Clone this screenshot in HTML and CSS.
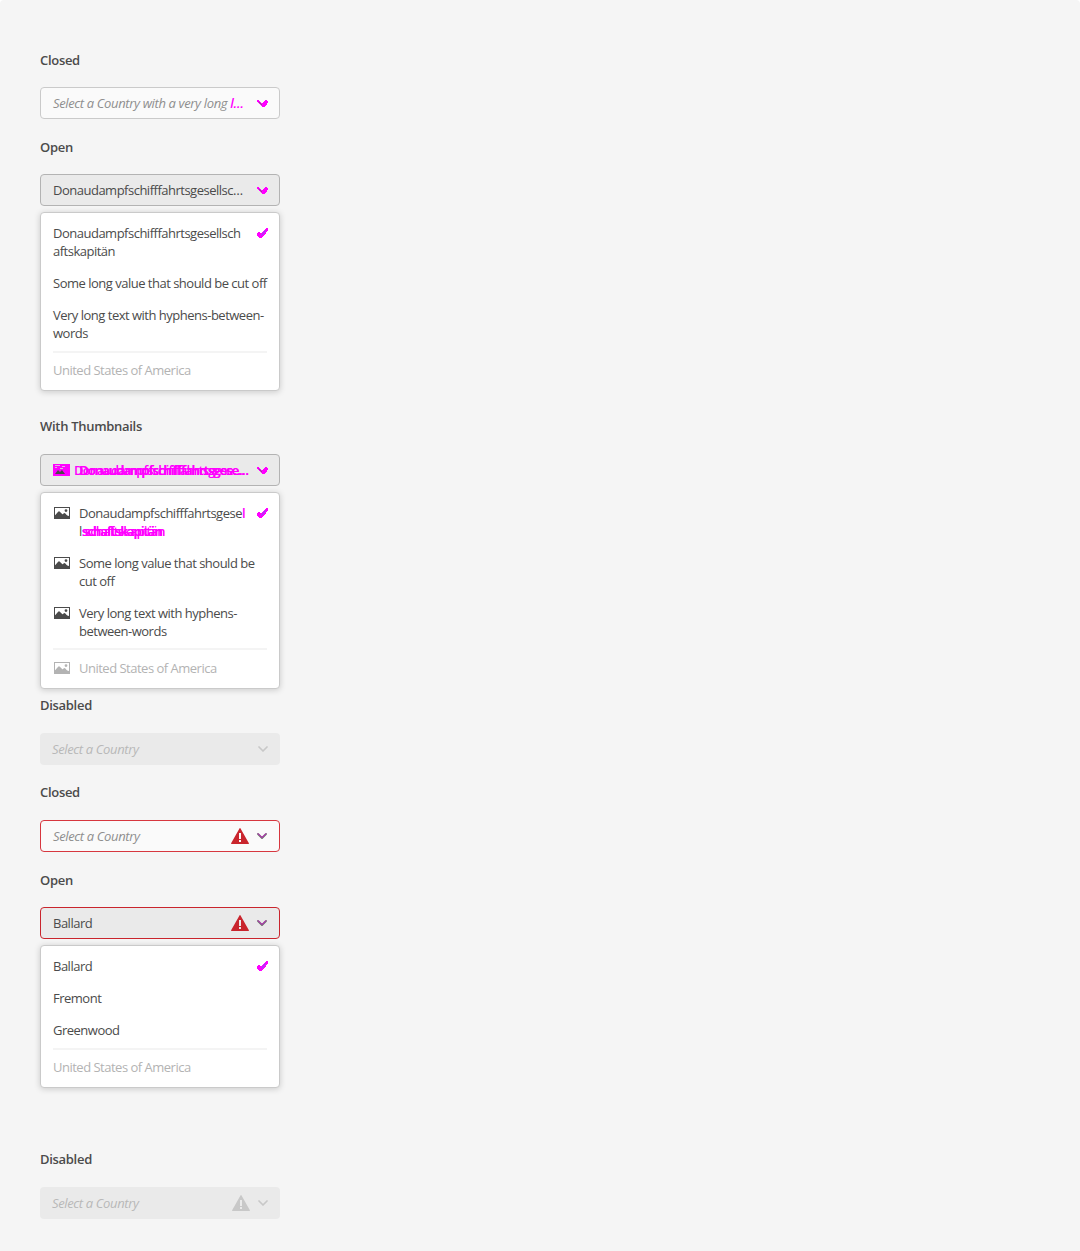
FILE: index.html
```html
<!DOCTYPE html>
<html lang="en">
<head>
<meta charset="utf-8">
<title>Select</title>
<link rel="stylesheet" href="styles.css">
</head>
<body>
<svg class="defs" aria-hidden="true">
  <symbol id="chevron" viewBox="0 0 10 6"><path d="M1 1l4 4 4-4" fill="none" stroke="currentColor" stroke-width="1.700" stroke-linecap="round" stroke-linejoin="round"/></symbol>
  <symbol id="chevron-tinted" viewBox="0 0 10 6"><path d="M1 1l4 4 4-4" fill="none" stroke="#6e6e6e" stroke-width="1.800" stroke-linecap="round" stroke-linejoin="round"/><path d="M1 .5l4 4 4-4" fill="none" stroke="#e010e0" stroke-width=".9"/></symbol>
  <symbol id="chevron-mark" viewBox="0 0 11 7"><path d="M0 0h2v1h1v1h1v1h2V2h1V1h1V0h2v1h1v2h-1v2H9v1H8v1H5V6H4V5H3V4H2V3H1V2H0z" fill="#f0f"/><path d="M2 2l3 3" stroke="#777" stroke-width="1"/></symbol>
  <symbol id="check" viewBox="0 0 11 10"><path d="M9 0h2v3h-1v1H9v2H8v1H7v1H6v1H5v1H2V9H1V8H0V5h1V4h2v1h2V4h1V3h1V2h1V1h1z" fill="#f0f"/><path d="M4.500 7.500l4-5" stroke="#6868f6" stroke-width="1"/></symbol>
  <symbol id="image" viewBox="0 0 16 12"><path fill-rule="evenodd" d="M0 0h16v12H0zM1 1v7.500l3.500-4h1l3 3L10 6.200h1l2 2.300 2 .5V1zM12 2.200a1.400 1.400 0 1 1 0 2.800 1.400 1.400 0 0 1 0-2.800z" fill="currentColor"/><path d="M1 8.800l3.500-4h1l3 3L10 6.500h1l2 2.200 2 .6V11H1z" fill="currentColor"/></symbol>
  <symbol id="image-twin" viewBox="0 0 17 12"><path d="M0 0h17v12H0z" fill="#f0f"/><path d="M2 1.500h5M9 2.500h3M2 3.500h2M7 4.500h3" stroke="#e0b0e0"/><path d="M2 10l3-4 2 2 2-2 3 4z" fill="#4b4b4b"/></symbol>
  <symbol id="alert" viewBox="0 0 18 16"><path fill-rule="evenodd" d="M8.600.3a.5.500 0 0 1 .8 0l8.500 15a.5.500 0 0 1-.4.700H.5a.5.500 0 0 1-.4-.7zM8 5v6h2V5zM8 12v2h2v-2z" fill="currentColor"/></symbol>
</svg>
<main>
  <section>
    <h2>Closed</h2>
    <div class="field placeholder"><span class="label">Select a Country with a very long <b class="mark">l…</b></span><svg class="chev mark"><use href="#chevron-mark"/></svg></div>
  </section>
  <section class="tall">
    <h2>Open</h2>
    <div class="field open"><span class="label">Donaudampfschifffahrtsgesellsc…</span><svg class="chev mark"><use href="#chevron-mark"/></svg></div>
    <ul class="menu">
      <li><span>Donaudampfschifffahrtsgesellsch<br>aftskapitän</span><svg class="tick"><use href="#check"/></svg></li>
      <li>Some long value that should be cut off</li>
      <li>Very long text with hyphens-between-<br>words</li>
      <li class="rule"></li>
      <li class="off">United States of America</li>
    </ul>
  </section>
  <section class="tall late">
    <h2>With Thumbnails</h2>
    <div class="field open"><svg class="thumb twin"><use href="#image-twin"/></svg><span class="label doubled">Donaudampfschifffahrtsgese…</span><svg class="chev mark"><use href="#chevron-mark"/></svg></div>
    <ul class="menu thumbs">
      <li><svg class="thumb"><use href="#image"/></svg><span>Donaudampfschifffahrtsgese<b class="mark">l</b><br>l<b class="tail">schaftskapitän</b></span><svg class="tick"><use href="#check"/></svg></li>
      <li><svg class="thumb"><use href="#image"/></svg><span>Some long value that should be<br>cut off</span></li>
      <li><svg class="thumb"><use href="#image"/></svg><span>Very long text with hyphens-<br>between-words</span></li>
      <li class="rule"></li>
      <li class="off"><svg class="thumb"><use href="#image"/></svg><span>United States of America</span></li>
    </ul>
  </section>
  <section class="late">
    <h2>Disabled</h2>
    <div class="field disabled"><span class="label">Select a Country</span><svg class="chev"><use href="#chevron"/></svg></div>
  </section>
  <section class="late">
    <h2>Closed</h2>
    <div class="field placeholder invalid"><span class="label">Select a Country</span><svg class="alert"><use href="#alert"/></svg><svg class="chev"><use href="#chevron-tinted"/></svg></div>
  </section>
  <section class="tall">
    <h2>Open</h2>
    <div class="field open invalid"><span class="label">Ballard</span><svg class="alert"><use href="#alert"/></svg><svg class="chev"><use href="#chevron-tinted"/></svg></div>
    <ul class="menu">
      <li><span>Ballard</span><svg class="tick"><use href="#check"/></svg></li>
      <li>Fremont</li>
      <li>Greenwood</li>
      <li class="rule"></li>
      <li class="off">United States of America</li>
    </ul>
  </section>
  <section class="late">
    <h2>Disabled</h2>
    <div class="field disabled"><span class="label">Select a Country</span><svg class="alert"><use href="#alert"/></svg><svg class="chev"><use href="#chevron"/></svg></div>
  </section>
</main>
</body>
</html>
```
FILE: styles.css
```css
* { box-sizing: border-box; }
html { background: #fff; }
body { margin: 0; color: #4b4b4b; font: 13px/18px "Open Sans", "Noto Sans", sans-serif; letter-spacing: -.5px; }
.defs { position: absolute; width: 0; height: 0; }
main { height: 1251px; padding: 47px 40px 0; background: #f5f5f5; border-radius: 4px 4px 0 0; overflow: hidden; }
section { position: relative; width: 240px; height: 87px; }
section.tall { height: 280px; }
section.late { margin-top: -1px; height: 88px; }
section.tall.late { height: 280px; }
h2 { margin: 0; height: 40px; font-size: 13px; font-weight: 600; line-height: 26px; letter-spacing: -.3px; white-space: nowrap; }
.late h2 { height: 41px; }
.field { display: flex; align-items: center; height: 32px; padding: 0 12px; border: 1px solid #cacaca; border-radius: 4px; background: #fafafa; white-space: nowrap; }
.label { flex: 1; min-width: 0; }
.placeholder .label, .disabled .label { font-style: italic; letter-spacing: -.36px; color: #8e8e8e; }
.open { background: #eaeaea; border-color: #b3b3b3; }
.disabled { background: #eaeaea; border: 0; color: #c8c8c8; }
.disabled .label { color: #b8b8b8; }
.invalid { border-color: #d7373f; }
.open.invalid { border-color: #c9252d; }
svg { display: block; flex: none; }
.chev { width: 10px; height: 6px; }
.chev.mark { width: 11px; height: 7px; margin: 1px -1px 0 0; }
.disabled .chev { color: #c8c8c8; }
.alert { width: 18px; height: 16px; margin-right: 8px; color: #c9252d; }
.disabled .alert { color: #c8c8c8; }
.mark { color: #f0f; font-weight: 600; }
.menu { position: absolute; z-index: 1; left: 0; top: 78px; width: 240px; margin: 0; padding: 4px 0; list-style: none; background: #fff; border: 1px solid #cacaca; border-radius: 4px; box-shadow: 0 1px 6px rgba(0, 0, 0, .18); }
.late .menu { top: 79px; }
.menu li { display: flex; align-items: flex-start; padding: 7px 12px; white-space: nowrap; }
.menu li.rule { height: 2px; margin: 2px 12px 1px; padding: 0; background: #f4f4f4; }
.thumbs li.rule { margin: 1px 12px 2px; }
.menu .off { color: #b3b3b3; }
.tick { width: 11px; height: 10px; margin: 4px -1px 0 auto; }
.thumb { width: 16px; height: 12px; margin: 3px 9px 0 1px; }
.twin { width: 17px; margin: 0 9px 0 0; }
.doubled { color: #f0f; font-weight: 600; letter-spacing: -.9px; text-shadow: -5px 0 #f0f, .4px 0 #f0f; }
.tail { font-weight: 600; letter-spacing: -.9px; color: #f0f; text-shadow: 3px 0 #f0f, .4px 0 #f0f; }
```
